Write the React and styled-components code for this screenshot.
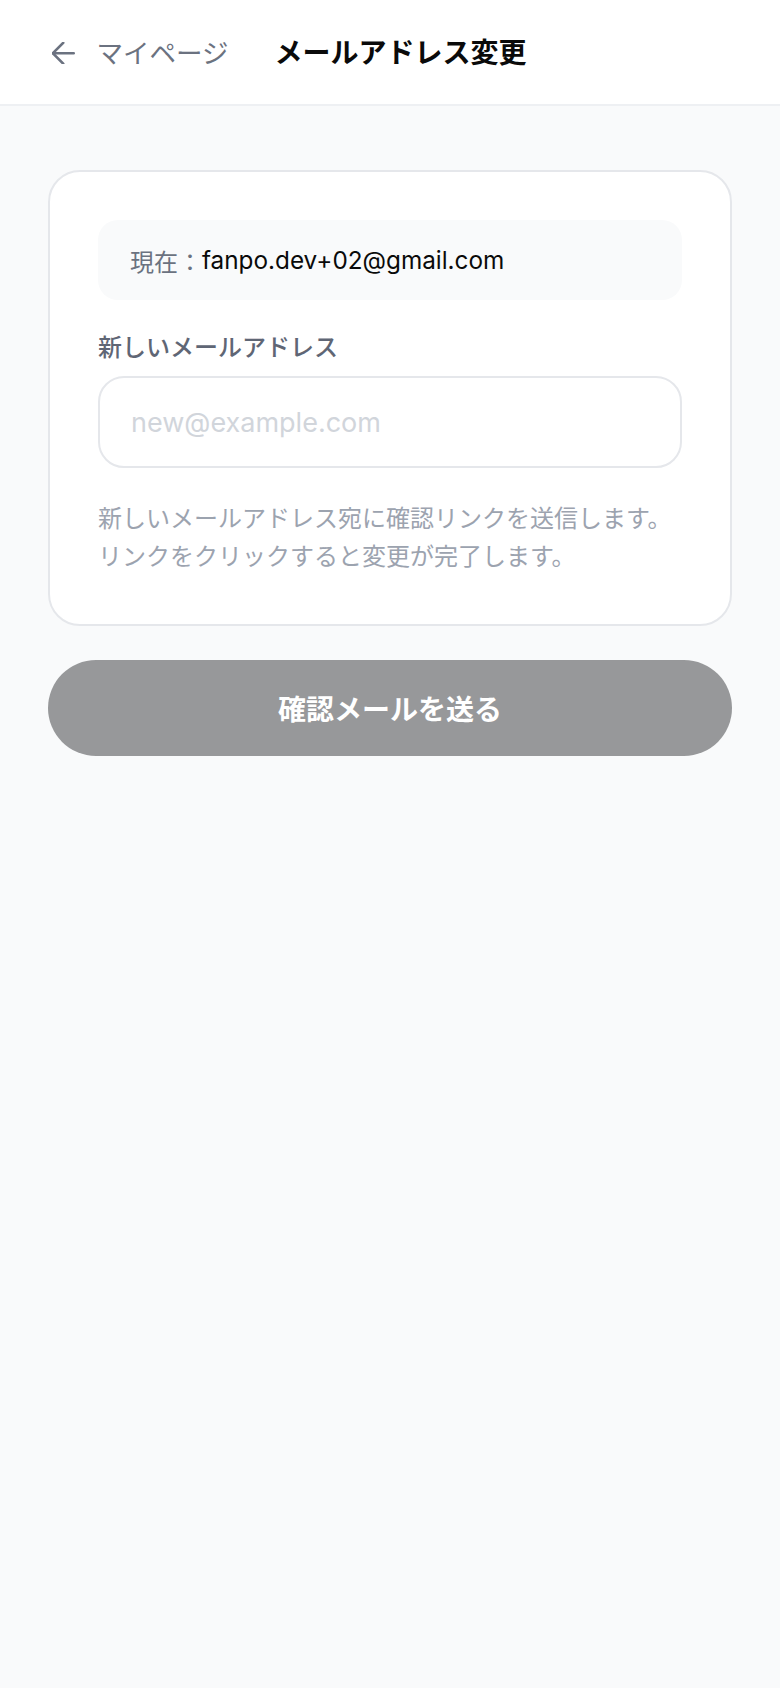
import React from "react";
import styled, { createGlobalStyle } from "styled-components";

const GlobalStyle = createGlobalStyle`
  html, body {
    margin: 0;
    padding: 0;
    background: #f9fafb;
  }
  body {
    font-family: Inter, "Noto Sans CJK JP", "Noto Sans", sans-serif;
    -webkit-font-smoothing: antialiased;
  }
  * { box-sizing: border-box; }
`;

const Page = styled.div`
  min-height: 1688px;
  background: #f9fafb;
`;

const Header = styled.header`
  height: 106px;
  background: #ffffff;
  border-bottom: 2px solid #eef0f3;
  display: flex;
  align-items: center;
  padding: 2px 52px 0;
`;

const BackLink = styled.a`
  display: flex;
  align-items: center;
  gap: 22px;
  color: #6b7280;
  text-decoration: none;
  font-size: 26.5px;
  line-height: 36px;
  cursor: pointer;
`;

const Title = styled.h1`
  margin: 0 0 0 46px;
  font-size: 28px;
  line-height: 36px;
  font-weight: 700;
  color: #0a0a0a;
`;

const Main = styled.main`
  padding: 64px 48px 0;
  display: flex;
  flex-direction: column;
  gap: 34px;
`;

const Card = styled.section`
  background: #ffffff;
  border: 2px solid #e5e7eb;
  border-radius: 32px;
  padding: 48px;
  display: flex;
  flex-direction: column;
`;

const CurrentBox = styled.div`
  height: 80px;
  border-radius: 20px;
  background: #f9fafb;
  display: flex;
  align-items: center;
  padding: 0 32px;
  font-size: 24px;
`;

const CurrentLabel = styled.span`
  color: #6b7280;
`;

const CurrentValue = styled.span`
  color: #0a0a0a;
  font-size: 24.3px;
`;

const FieldLabel = styled.label`
  margin-top: 30px;
  font-size: 24px;
  line-height: 36px;
  font-weight: 500;
  color: #5f6675;
`;

const Input = styled.input`
  margin-top: 10px;
  height: 92px;
  width: 100%;
  border: 2px solid #e5e7eb;
  border-radius: 26px;
  padding: 0 31px;
  font-family: inherit;
  font-size: 27px;
  color: #111827;
  background: #ffffff;
  outline: none;
  &::placeholder {
    color: #d1d5db;
  }
`;

const Help = styled.p`
  margin: 32px 0 0;
  font-size: 24px;
  line-height: 38px;
  color: #9ca3af;
`;

const SubmitButton = styled.button`
  height: 96px;
  width: 100%;
  border: none;
  border-radius: 999px;
  background: #97989a;
  color: #ffffff;
  font-family: inherit;
  font-size: 28px;
  font-weight: 700;
  cursor: not-allowed;
`;

const ArrowIcon = () => (
  <svg width="22.5" height="22.5" viewBox="4.5 4.5 15 15" fill="none" stroke="currentColor" strokeWidth="1.7" strokeLinecap="round" strokeLinejoin="round">
    <path d="M19 12H5" />
    <path d="M12 19l-7-7 7-7" />
  </svg>
);

export default function App() {
  return (
    <>
      <GlobalStyle />
      <Page>
        <Header>
          <BackLink>
            <ArrowIcon />
            <span>マイページ</span>
          </BackLink>
          <Title>メールアドレス変更</Title>
        </Header>
        <Main>
          <Card>
            <CurrentBox>
              <CurrentLabel>現在：</CurrentLabel>
              <CurrentValue>fanpo.dev+02@gmail.com</CurrentValue>
            </CurrentBox>
            <FieldLabel htmlFor="new-email">新しいメールアドレス</FieldLabel>
            <Input id="new-email" type="email" placeholder="new@example.com" />
            <Help>
              新しいメールアドレス宛に確認リンクを送信します。
              <br />
              リンクをクリックすると変更が完了します。
            </Help>
          </Card>
          <SubmitButton disabled>確認メールを送る</SubmitButton>
        </Main>
      </Page>
    </>
  );
}
